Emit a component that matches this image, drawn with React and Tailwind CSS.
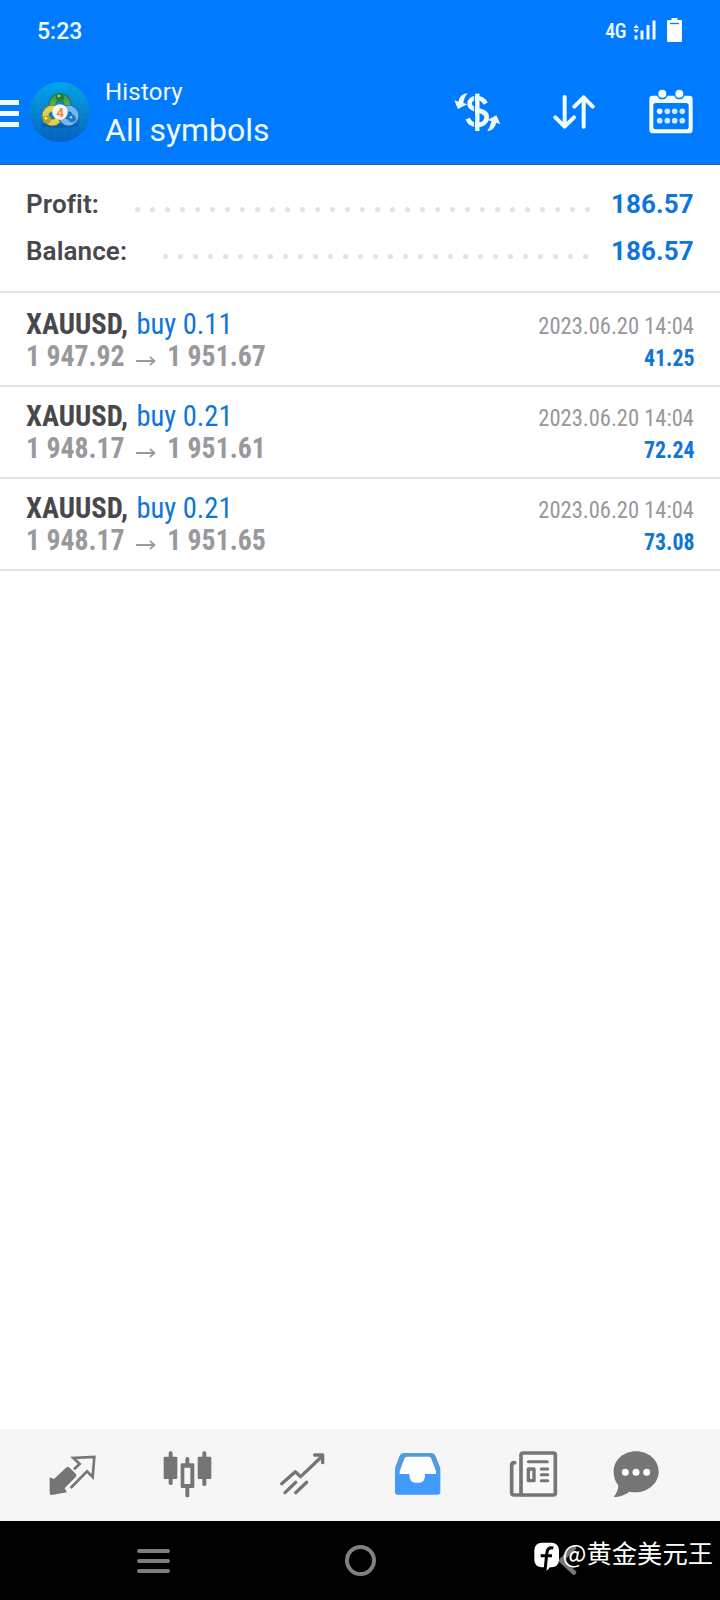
import clsx from 'clsx';

const trades = [
  { symbol: 'XAUUSD', side: 'buy 0.11', open: '1 947.92', close: '1 951.67', time: '2023.06.20 14:04', profit: '41.25' },
  { symbol: 'XAUUSD', side: 'buy 0.21', open: '1 948.17', close: '1 951.61', time: '2023.06.20 14:04', profit: '72.24' },
  { symbol: 'XAUUSD', side: 'buy 0.21', open: '1 948.17', close: '1 951.65', time: '2023.06.20 14:04', profit: '73.08' },
];

const condensed = "font-['Roboto_Condensed','Roboto',sans-serif]";

const StatusBar = () => (
  <div className="flex h-[62px] items-center justify-between pl-[37px] pr-[38px]">
    <span className="text-[23px] font-medium leading-none">5:23</span>
    <div className="flex items-center">
      <span className={`${condensed} mr-[7px] text-[20px] font-medium leading-none tracking-[-0.5px]`}>4G</span>
      <svg className="mr-[11px] h-[22px] w-[23px]" viewBox="0 0 23 22" fill="currentColor">
        <path d="M0.5 8 3.2 4.5 6 8ZM0.5 9.500 3.2 13 6 9.500Z" />
        <rect x="1.5" y="15.500" width="3" height="4" />
        <rect x="7.5" y="10.500" width="3" height="9" />
        <rect x="13.5" y="5" width="3" height="14.500" />
        <rect x="19.5" y="0.500" width="3" height="19" />
      </svg>
      <svg className="h-[24px] w-[15px] -translate-y-px" viewBox="0 0 15 24">
        <path d="M4.5 0h6v2H14q1 0 1 1v20q0 1-1 1H1q-1 0-1-1V3q0-1 1-1h3.500Z" fill="#fff" />
        <path d="M3 5.500h9" stroke="#0a7cff" strokeWidth="1.300" />
      </svg>
    </div>
  </div>
);

const Logo = () => (
  <svg className="ml-[10px] h-[62px] w-[62px] -translate-y-px" viewBox="0 0 62 62">
    <defs>
      <linearGradient id="disc" x1="0" y1="0" x2="0" y2="1">
        <stop offset="0" stopColor="#00a6ee" />
        <stop offset="0.5" stopColor="#0683cf" />
        <stop offset="1" stopColor="#045fc0" />
      </linearGradient>
      <linearGradient id="green" x1="0" y1="0" x2="0" y2="1">
        <stop offset="0" stopColor="#3d9a4a" />
        <stop offset="1" stopColor="#7cc25e" />
      </linearGradient>
    </defs>
    <circle cx="31" cy="31" r="30" fill="url(#disc)" />
    <path d="M10 10v42M18 5v52M26 2v58M36 2v58M44 5v52M52 10v42M5 18h52M2 26h58M2 36h58M5 44h52" stroke="#27a5ee" strokeOpacity="0.25" strokeWidth="0.700" />
    <ellipse cx="31" cy="44" rx="19" ry="3" fill="#024c94" opacity="0.5" />
    <g fill="none">
      <circle cx="31" cy="23.500" r="7.500" stroke="#2b6b3a" strokeWidth="7.500" />
      <circle cx="31" cy="23.500" r="7.500" stroke="url(#green)" strokeWidth="6" />
      <circle cx="23.500" cy="34.500" r="7" stroke="#7a7628" strokeWidth="7.500" />
      <circle cx="23.500" cy="34.500" r="7" stroke="#ddd052" strokeWidth="6" />
      <circle cx="39.500" cy="34.500" r="7" stroke="#2463a4" strokeWidth="7.500" />
      <circle cx="39.500" cy="34.500" r="7" stroke="#6fb8f0" strokeWidth="6" />
    </g>
    <circle cx="31" cy="16.500" r="4" fill="#2a7c36" />
    <circle cx="18" cy="38.500" r="4" fill="#b9a11f" />
    <circle cx="43" cy="37.500" r="3.800" fill="#2475c4" />
    <circle cx="30" cy="15" r="1.300" fill="#9ed89a" />
    <circle cx="17" cy="37.200" r="1.300" fill="#f6edaa" />
    <circle cx="42" cy="36.300" r="1.200" fill="#a8d4f6" />
    <circle cx="31" cy="31" r="7.800" fill="#f7f5ec" />
    <text x="31" y="35.700" textAnchor="middle" fontSize="13.500" fontWeight="700" fill="#ea8650">4</text>
  </svg>
);

const ExchangeIcon = () => (
  <svg className="h-[44px] w-[50px]" viewBox="0 0 150 132" fill="none" stroke="currentColor">
    <path d="M76 11v112" strokeWidth="13" />
    <path d="M101 41C95 29 87 24 74 24c-14 0-21 8-21 17 0 25 51 14 51 40 0 14-11 24-29 24-15 0-23-7-28-19" strokeWidth="14" />
    <path d="M67 17v100" stroke="#007aff" strokeWidth="3" />
    <path d="M47 10C31 11 21 21 20 35L7 31l11 26 28-14-12-4c2-12 6-21 13-29ZM106 123c15-1 24-11 26-25l13 4-12-26-27 14 12 4c-2 12-6 21-12 29Z" fill="currentColor" stroke="none" />
  </svg>
);

const SortIcon = () => (
  <svg className="h-[36px] w-[42px]" viewBox="0 0 126 108" fill="none" stroke="currentColor" strokeWidth="12" strokeLinecap="round" strokeLinejoin="round">
    <path d="M35 9v88M7 70l28 28 28-28M92 98V10M64 38 92 10l27 28" />
  </svg>
);

const CalendarIcon = () => (
  <svg className="h-[45px] w-[44px]" viewBox="0 0 132 135" fill="currentColor">
    <path fillRule="evenodd" d="M10 20h15q3 11 15 11t15-11h21q3 11 15 11t15-11h15q10 0 10 10v92q0 11-11 11H12q-11 0-11-11V30q0-10 9-10ZM20 42q-7 0-7 8v63q0 8 8 8h90q8 0 8-8V50q0-8-8-8Z" />
    <circle cx="40" cy="14" r="12" />
    <circle cx="91" cy="14" r="12" />
    <circle cx="32" cy="67" r="8.500" />
    <g opacity="0.85">
      <circle cx="55" cy="67" r="8.500" />
      <circle cx="77" cy="67" r="8.500" />
      <circle cx="100" cy="67" r="8.500" />
      <circle cx="32" cy="95" r="8.500" />
      <circle cx="55" cy="95" r="8.500" />
      <circle cx="77" cy="95" r="8.500" />
      <circle cx="100" cy="95" r="8.500" />
    </g>
  </svg>
);

const Toolbar = () => (
  <div className="flex h-[102px] items-center pr-[27px]">
    <div className="mt-px flex w-[19px] flex-col gap-[6px]">
      <span className="h-[5px] bg-[#f0fcff]" />
      <span className="h-[5px] bg-[#f0fcff]" />
      <span className="h-[5px] bg-[#f0fcff]" />
    </div>
    <Logo />
    <div className="ml-[14px] flex-1">
      <div className="text-[24px] leading-[34px] tracking-[0.2px]">History</div>
      <div className="text-[32px] leading-[42px]">All symbols</div>
    </div>
    <div className="mb-[2px]"><ExchangeIcon /></div>
    <div className="mb-[2px] ml-[51px] mr-px"><SortIcon /></div>
    <div className="mb-[4px] ml-[53px]"><CalendarIcon /></div>
  </div>
);

const SummaryRow = ({ label, value, dots, gap }) => (
  <div className="flex h-[47px] items-center pl-[26px] pr-[27px] text-[26px] leading-[47px]">
    <span className="font-semibold tracking-[0.1px] text-[#48484c]">{label}</span>
    <span className={clsx('mt-[9px] flex flex-1 justify-between', gap)}>
      {Array.from({ length: dots }).map((_, i) => (
        <i key={i} className="size-[5px] rounded-full bg-[#e2e2e2]" />
      ))}
    </span>
    <span className="w-[82px] text-right font-bold tracking-[0.1px] text-[#0f75da]">{value}</span>
  </div>
);

const TradeRow = ({ trade, first }) => (
  <div className={clsx(condensed, 'border-b-2 border-[#e2e2e2] px-[26px] pb-[13px] text-[30px] leading-8', first ? 'pt-[15px]' : 'pt-[13px]')}>
    <div className="flex h-8 items-baseline justify-between">
      <div className="origin-left scale-x-[0.95]">
        <span className="mr-[2px] font-bold text-[#48484c]">{trade.symbol},</span>{' '}
        <span className="text-[#0f75da]">{trade.side}</span>
      </div>
      <span className="origin-right scale-x-[0.938] text-[24px] text-[#96989b]">{trade.time}</span>
    </div>
    <div className="flex h-8 items-baseline justify-between">
      <div className="flex origin-left scale-x-[0.925] items-baseline font-bold text-[#98999c]">
        <span>{trade.open}</span>
        <svg className="ml-[12px] mr-[13px] h-[10px] w-[21px]" viewBox="0 0 21 10" fill="none" stroke="currentColor" strokeWidth="1.800">
          <path d="M0 5h20M15 1l5 4-5 4" />
        </svg>
        <span>{trade.close}</span>
      </div>
      <span className="origin-right scale-x-[0.91] text-[24px] font-bold text-[#0f75da]">{trade.profit}</span>
    </div>
  </div>
);

const TabBar = () => (
  <div className="flex h-[92px] items-start bg-[#f6f6f6] text-[#757575]">
    <svg className="ml-[48px] mt-[24px] h-[44px] w-[50px]" viewBox="144 99 150 132" fill="none" stroke="currentColor" strokeWidth="8">
      <path d="M149 172l13 5 36-34q6-4 11 0l18 18q5 5 0 10l-33 34 7 12-46 8q-6 0-6-6Z" fill="currentColor" stroke="none" />
      <path d="M222 148l17-16-19-18 63-3-5 60-17-17-49 50" />
    </svg>
    <svg className="ml-[65px] mt-[22px] h-[48px] w-[50px]" viewBox="489 93 150 144" fill="currentColor">
      <rect x="506" y="94" width="12" height="101" rx="5" />
      <rect x="491" y="110" width="41" height="67" rx="4" />
      <rect x="607" y="94" width="12" height="104" rx="5" />
      <rect x="593" y="110" width="41" height="67" rx="4" />
      <path fillRule="evenodd" d="M556 130v-14q0-5 6-5t6 5v14h11q4 0 4 4v66q0 4-4 4h-11v23q0 5-6 5t-6-5v-23h-10q-4 0-4-4v-66q0-4 4-4Zm-3 13v49h18v-49Z" />
    </svg>
    <svg className="ml-[66px] mt-[23px] h-[44px] w-[46px]" viewBox="117 96 138 132" fill="none" stroke="currentColor" strokeWidth="10" strokeLinecap="round" strokeLinejoin="round">
      <path d="M125 191l41-36 16 15 62-59M135 218l32-31M167 218l33-31" />
      <path d="M224 105h24v23" />
    </svg>
    <svg className="ml-[69px] mt-[23px] h-[44px] w-[48px]" viewBox="462 96 144 132" fill="#429aff">
      <path d="M465 162v-18l14-37q3-8 12-8h83q9 0 12 8l15 37v18Z" fill="#549ae0" />
      <path d="M465 161h136v55q0 8-8 8H473q-8 0-8-8Z" />
      <path d="M479 154l14-38q2-6 8-6h65q6 0 8 6l14 38v8h-33q2 27-23 27t-24-27h-29Z" fill="#fdfdfd" />
    </svg>
    <svg className="ml-[67px] mt-[21px] h-[48px] w-[50px]" viewBox="87 90 150 144" fill="none" stroke="currentColor" strokeWidth="11" strokeLinecap="round">
      <path d="M124 225H102q-7 0-7-8v-82q0-7 9-7" />
      <rect x="123" y="99" width="103" height="126" rx="6" fill="#f9f9f9" />
      <path d="M145 125h57M184 147h19M184 164h19M184 182h19" strokeWidth="9" />
      <rect x="145" y="147" width="17" height="35" strokeWidth="10" strokeLinejoin="round" fill="#f9f9f9" />
    </svg>
    <svg className="ml-[53px] mt-[21px] h-[48px] w-[48px]" viewBox="396 90 144 144" fill="currentColor">
      <path d="M468 94c38 0 68 27 68 61 0 39-42 70-88 60-9 8-28 16-47 16 8-9 14-22 14-35-9-11-14-25-14-41 0-34 29-61 67-61Z" />
      <g fill="#fff">
        <circle cx="436" cy="157" r="10.500" />
        <circle cx="468" cy="157" r="10.500" />
        <circle cx="500" cy="157" r="10.500" />
      </g>
    </svg>
  </div>
);

const NavBar = () => (
  <div className="relative flex h-[79px] items-start bg-black">
    <div className="ml-[137px] mt-[28px] flex w-[33px] flex-col gap-[6px]">
      <span className="h-[4px] rounded-full bg-[#7d7d7d]" />
      <span className="h-[4px] rounded-full bg-[#7d7d7d]" />
      <span className="h-[4px] rounded-full bg-[#7d7d7d]" />
    </div>
    <span className="ml-[175px] mt-[24px] size-[31px] rounded-full border-4 border-[#808080]" />
    <svg className="ml-[181px] mt-[24px] h-[32px] w-[22px]" viewBox="0 0 22 32" fill="none" stroke="#777" strokeWidth="4.500" strokeLinecap="round" strokeLinejoin="round">
      <path d="M17 3 4 15.500l13 12" />
    </svg>
    <div className="absolute right-[7px] top-[11px] flex items-center text-white">
      <svg className="mr-[3px] mt-[10px] h-[29px] w-[26px]" viewBox="159 367 78 87">
        <rect x="160" y="369" width="74" height="74" rx="22" fill="#fff" />
        <path d="M188 440h20q-3 8-13 14v-12Z" fill="#fff" />
        <path d="M217 385q-16-3-19 12-3 26-6 57M179 408h34" fill="none" stroke="#000" strokeWidth="9" />
      </svg>
      <span className="font-['Noto_Sans_CJK_SC',sans-serif] text-[25.300px] leading-9">@黄金美元王</span>
    </div>
  </div>
);

export default function App() {
  return (
    <div className="flex h-[1600px] w-[720px] flex-col overflow-hidden bg-white font-['Roboto',sans-serif]">
      <header className="h-[165px] border-b border-[#2268a8] bg-[#007aff] text-[#f0fcff]">
        <StatusBar />
        <Toolbar />
      </header>
      <section className="border-b-2 border-[#e2e2e2] py-4">
        <SummaryRow label="Profit:" value="186.57" dots={31} gap="ml-[36px] mr-[21px]" />
        <SummaryRow label="Balance:" value="186.57" dots={29} gap="ml-[36px] mr-[23px]" />
      </section>
      <main className="flex-1">
        {trades.map((trade, i) => (
          <TradeRow key={i} trade={trade} first={i === 0} />
        ))}
      </main>
      <TabBar />
      <NavBar />
    </div>
  );
}
